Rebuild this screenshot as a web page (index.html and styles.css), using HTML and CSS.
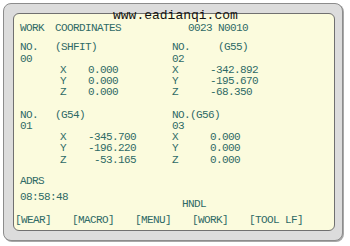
FILE: index.html
```html
<!DOCTYPE html>
<html>
<head>
    <meta charset="UTF-8">
    <title>WORK COORDINATES</title>
    <link rel="stylesheet" href="styles.css">
</head>
<body>
    <div class="bezel">
        <div class="screen">
            <div class="head">
                <span class="c-title">WORK</span><span class="c-coord">COORDINATES</span><span class="c-prog">0023</span><span>N0010</span>
            </div>

            <div class="blocks">
                <div class="block left">
                    <div class="row"><span class="c-no">NO.</span><span>(SHFIT)</span></div>
                    <div class="row">00</div>
                    <div class="row"><span class="c-ax">X</span><span class="c-val">0.000</span></div>
                    <div class="row"><span class="c-ax">Y</span><span class="c-val">0.000</span></div>
                    <div class="row"><span class="c-ax">Z</span><span class="c-val">0.000</span></div>
                </div>
                <div class="block right">
                    <div class="row"><span class="c-no">NO.</span><span>(G55)</span></div>
                    <div class="row">02</div>
                    <div class="row"><span class="c-ax">X</span><span class="c-val">-342.892</span></div>
                    <div class="row"><span class="c-ax">Y</span><span class="c-val">-195.670</span></div>
                    <div class="row"><span class="c-ax">Z</span><span class="c-val">-68.350</span></div>
                </div>
                <div class="block left">
                    <div class="row"><span class="c-no">NO.</span><span>(G54)</span></div>
                    <div class="row">01</div>
                    <div class="row"><span class="c-ax">X</span><span class="c-val r">-345.700</span></div>
                    <div class="row"><span class="c-ax">Y</span><span class="c-val r">-196.220</span></div>
                    <div class="row"><span class="c-ax">Z</span><span class="c-val r">-53.165</span></div>
                </div>
                <div class="block right">
                    <div class="row">NO.(G56)</div>
                    <div class="row">03</div>
                    <div class="row"><span class="c-ax">X</span><span class="c-val">0.000</span></div>
                    <div class="row"><span class="c-ax">Y</span><span class="c-val">0.000</span></div>
                    <div class="row"><span class="c-ax">Z</span><span class="c-val">0.000</span></div>
                </div>
            </div>

            <div class="adrs">ADRS</div>
            <div class="status">
                <span class="time">08:58:48</span>
                <span class="mode">HNDL</span>
            </div>

            <div class="softkeys">
                <span>[WEAR]</span>
                <span>[MACRO]</span>
                <span>[MENU]</span>
                <span>[WORK]</span>
                <span>[TOOL LF]</span>
            </div>
        </div>
        <div class="mark">www.eadianqi.com</div>
    </div>
</body>
</html>
```

FILE: styles.css
```css
body {
    margin: 0;
    background: #ffffff;
}
.bezel {
    position: relative;
    box-sizing: border-box;
    width: 340px;
    height: 238px;
    margin: 3px;
    padding: 9px;
    background: #dcdcdc;
    border: 1px solid #8c8c8c;
    border-radius: 8px;
    box-shadow: 1px 1px 0 #a8a8a8;
}
.screen {
    box-sizing: border-box;
    width: 322px;
    height: 218px;
    padding: 9px 0 0 6px;
    background: #fbfbdd;
    border: 1px solid #707070;
    border-radius: 6px;
    font-family: "Liberation Mono", monospace;
    font-size: 11px;
    letter-spacing: -0.6px;
    line-height: 11.25px;
    color: #2e6a66;
}
.head {
    display: flex;
}
.c-title {
    width: 35px;
}
.c-coord {
    width: 133px;
}
.c-prog {
    width: 30px;
}
.blocks {
    display: grid;
    grid-template-columns: 152px 1fr;
    row-gap: 11px;
    margin-top: 8px;
}
.row {
    display: flex;
    white-space: pre;
}
.left .c-no {
    width: 35px;
}
.left .c-ax {
    width: 28px;
    margin-left: 40px;
}
.left .c-val.r {
    width: 48px;
    text-align: right;
}
.right .c-no {
    width: 46px;
}
.right .c-ax {
    width: 38px;
}
.adrs {
    margin-top: 10px;
}
.status {
    display: flex;
    margin-top: 5px;
}
.time {
    width: 162px;
}
.mode {
    padding-top: 7px;
}
.softkeys {
    display: flex;
    gap: 21px;
    margin: 5px 0 0 -5px;
}
.mark {
    position: absolute;
    left: 109px;
    top: 6px;
    font-family: "Liberation Mono", monospace;
    font-size: 13px;
    line-height: 12px;
    color: #111111;
}
```
